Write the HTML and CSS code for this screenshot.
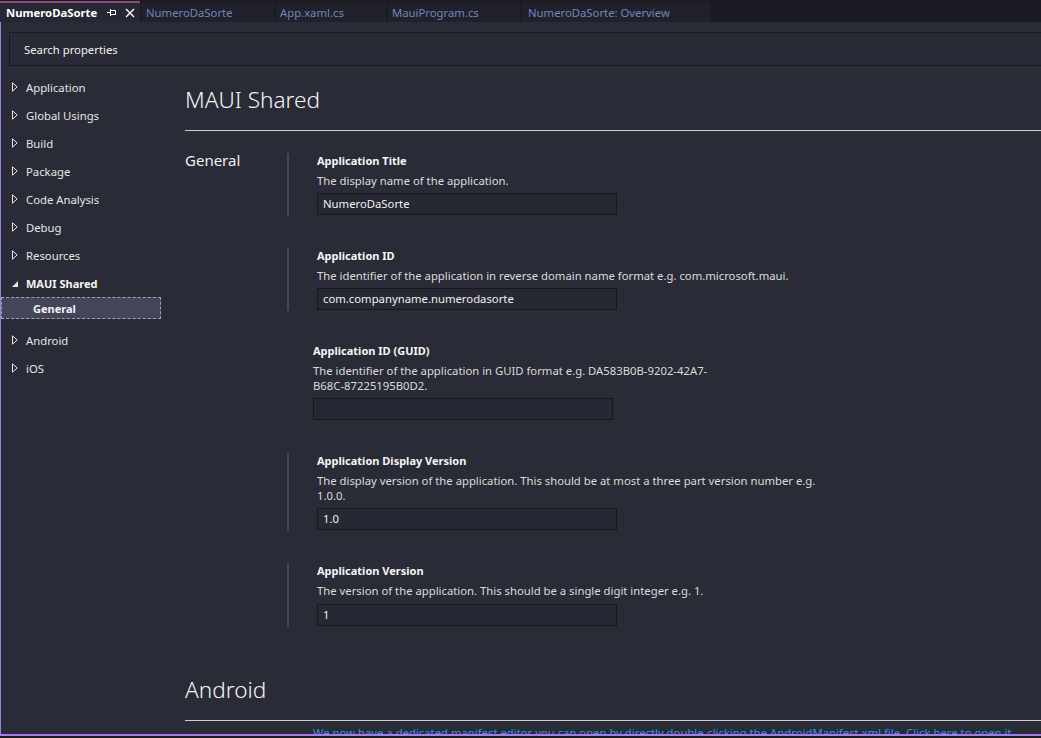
FILE: index.html
```html
<!DOCTYPE html>
<html>
<head>
<meta charset="utf-8">
<link rel="stylesheet" href="styles.css">
</head>
<body>
<div class="window">
  <div class="tabs">
    <div class="tab active">
      <span class="tab-title">NumeroDaSorte</span>
      <svg class="pin" width="9" height="9" viewBox="0 0 9 9"><path d="M0 4.5H3M3.5 1V8M3.5 2.5H8.5V6.5H3.5" fill="none" stroke="#fff" stroke-width="1"/></svg>
      <svg class="close" width="10" height="10" viewBox="0 0 10 10"><path d="M1 1L9 9M9 1L1 9" stroke="#fff" stroke-width="1.4"/></svg>
    </div>
    <div class="tab t2">NumeroDaSorte</div>
    <div class="tab t3">App.xaml.cs</div>
    <div class="tab t4">MauiProgram.cs</div>
    <div class="tab t5">NumeroDaSorte: Overview</div>
  </div>
  <div class="main">
    <div class="search">Search properties</div>
    <div class="body">
      <nav class="nav">
        <div class="nav-item"><svg class="tri" width="6" height="10" viewBox="0 0 6 10"><path d="M0.5 0.8L5.2 5L0.5 9.2Z" fill="none" stroke="#e6e6e6" stroke-width="1"/></svg>Application</div>
        <div class="nav-item"><svg class="tri" width="6" height="10" viewBox="0 0 6 10"><path d="M0.5 0.8L5.2 5L0.5 9.2Z" fill="none" stroke="#e6e6e6" stroke-width="1"/></svg>Global Usings</div>
        <div class="nav-item"><svg class="tri" width="6" height="10" viewBox="0 0 6 10"><path d="M0.5 0.8L5.2 5L0.5 9.2Z" fill="none" stroke="#e6e6e6" stroke-width="1"/></svg>Build</div>
        <div class="nav-item"><svg class="tri" width="6" height="10" viewBox="0 0 6 10"><path d="M0.5 0.8L5.2 5L0.5 9.2Z" fill="none" stroke="#e6e6e6" stroke-width="1"/></svg>Package</div>
        <div class="nav-item"><svg class="tri" width="6" height="10" viewBox="0 0 6 10"><path d="M0.5 0.8L5.2 5L0.5 9.2Z" fill="none" stroke="#e6e6e6" stroke-width="1"/></svg>Code Analysis</div>
        <div class="nav-item"><svg class="tri" width="6" height="10" viewBox="0 0 6 10"><path d="M0.5 0.8L5.2 5L0.5 9.2Z" fill="none" stroke="#e6e6e6" stroke-width="1"/></svg>Debug</div>
        <div class="nav-item"><svg class="tri" width="6" height="10" viewBox="0 0 6 10"><path d="M0.5 0.8L5.2 5L0.5 9.2Z" fill="none" stroke="#e6e6e6" stroke-width="1"/></svg>Resources</div>
        <div class="nav-item open"><svg class="tri" width="6" height="10" viewBox="0 0 6 10"><path d="M6 3V9H0Z" fill="#e6e6e6"/></svg>MAUI Shared</div>
        <div class="nav-sub">General</div>
        <div class="nav-item"><svg class="tri" width="6" height="10" viewBox="0 0 6 10"><path d="M0.5 0.8L5.2 5L0.5 9.2Z" fill="none" stroke="#e6e6e6" stroke-width="1"/></svg>Android</div>
        <div class="nav-item"><svg class="tri" width="6" height="10" viewBox="0 0 6 10"><path d="M0.5 0.8L5.2 5L0.5 9.2Z" fill="none" stroke="#e6e6e6" stroke-width="1"/></svg>iOS</div>
      </nav>
      <div class="content">
        <h1 class="page-title">MAUI Shared</h1>
        <div class="rule"></div>
        <div class="section">
          <div class="section-name">General</div>
          <div class="fields">
            <div class="field">
              <div class="label">Application Title</div>
              <div class="desc">The display name of the application.</div>
              <div class="input">NumeroDaSorte</div>
            </div>
            <div class="field">
              <div class="label">Application ID</div>
              <div class="desc">The identifier of the application in reverse domain name format e.g. com.microsoft.maui.</div>
              <div class="input">com.companyname.numerodasorte</div>
            </div>
            <div class="field nobar">
              <div class="label">Application ID (GUID)</div>
              <div class="desc">The identifier of the application in GUID format e.g. DA583B0B-9202-42A7-<br>B68C-87225195B0D2.</div>
              <div class="input"></div>
            </div>
            <div class="field">
              <div class="label">Application Display Version</div>
              <div class="desc">The display version of the application. This should be at most a three part version number e.g.<br>1.0.0.</div>
              <div class="input">1.0</div>
            </div>
            <div class="field">
              <div class="label">Application Version</div>
              <div class="desc">The version of the application. This should be a single digit integer e.g. 1.</div>
              <div class="input">1</div>
            </div>
          </div>
        </div>
        <h1 class="page-title android">Android</h1>
        <div class="rule"></div>
        <div class="link-row"><span class="link">We now have a dedicated manifest editor you can open by directly double-clicking the AndroidManifest.xml file. Click here to open it.</span></div>
      </div>
    </div>
  </div>
</div>
</body>
</html>
```
FILE: styles.css
```css
* { box-sizing: border-box; }
html, body { margin: 0; padding: 0; }
body {
  background: #1b1b24;
  font-family: "Segoe UI", "Noto Sans", sans-serif;
  font-size: 11.3px;
  color: #e8e8e8;
  width: 1041px;
  height: 738px;
  overflow: hidden;
}
.window { display: flex; flex-direction: column; height: 738px; }
.tabs { height: 22px; display: flex; align-items: flex-end; gap: 2px; background: #1b1b24; flex: none; }
.tab {
  height: 19px;
  background: #20212b;
  color: #6f86bd;
  display: flex;
  align-items: center;
  white-space: nowrap;
  line-height: 19px;
}
.tab.active {
  height: 21px;
  width: 140px;
  background: #262734;
  border-top: 2px solid #8a4c74;
  color: #ffffff;
  font-weight: bold;
  padding-left: 6px;
}
.tab-title { width: 101px; }
.pin { margin-right: 9px; }
.t2 { width: 132px; padding-left: 4px; }
.t3 { width: 110px; padding-left: 4px; }
.t4 { width: 132px; padding-left: 4px; }
.t5 { width: 188px; padding-left: 6px; }
.main {
  flex: 1;
  background: #292b36;
  border-left: 1px solid #a27de6;
  border-bottom: 2px solid #a27de6;
  margin-bottom: 2px;
  overflow: hidden;
  display: flex;
  flex-direction: column;
}
.search {
  margin: 10px 0 0 8px;
  height: 34px;
  border: 1px solid #191a21;
  border-right: none;
  background: #282a35;
  padding-left: 14px;
  display: flex;
  align-items: center;
  color: #f0f0f0;
  flex: none;
}
.body { display: flex; flex: 1; min-height: 0; }
.nav { width: 160px; flex: none; padding-top: 7px; }
.nav-item {
  height: 28px;
  display: flex;
  align-items: center;
  padding-left: 11px;
  color: #e6e6e6;
}
.tri { margin-right: 8px; flex: none; }
.nav-item.open { font-weight: bold; color: #f4f4f4; font-size: 11px; }
.nav-sub {
  height: 22px;
  margin-bottom: 7px;
  background: #43465a;
  border: 1px dashed #a0a0aa;
  padding-left: 31px;
  display: flex;
  align-items: center;
  font-weight: bold;
  font-size: 11px;
  color: #f4f4f4;
}
.content { flex: 1; padding-left: 24px; min-width: 0; }
.page-title {
  margin: 19px 0 0 0;
  font-size: 22.6px;
  font-weight: 300;
  line-height: 30px;
  color: #f4f4f4;
}
.rule { height: 1px; background: #cfcfcf; margin-top: 15px; }
.section { display: flex; margin-top: 22px; }
.section-name { width: 102px; font-size: 15px; line-height: 18px; color: #f0f0f0; flex: none; margin-top: -2px; }
.fields { display: flex; flex-direction: column; gap: 32px; }
.field { border-left: 2px solid #45475b; padding-left: 28px; padding-bottom: 1px; }
.field.nobar { border-left: none; padding-left: 26px; }
.label { font-weight: bold; font-size: 11px; line-height: 16px; color: #f6f6f6; }
.desc { line-height: 15px; margin-top: 4px; color: #dcdcdc; }
.input {
  width: 300px;
  height: 22px;
  margin-top: 5px;
  border: 1px solid #16171d;
  background: #262833;
  padding-left: 5px;
  line-height: 20px;
  color: #f0f0f0;
}
.field:last-child .input { margin-top: 6px; }
.page-title.android { margin-top: 48px; }
.link-row { padding-left: 128px; margin-top: 4px; white-space: nowrap; }
.link { color: #3d8fe8; text-decoration: underline; }
```
